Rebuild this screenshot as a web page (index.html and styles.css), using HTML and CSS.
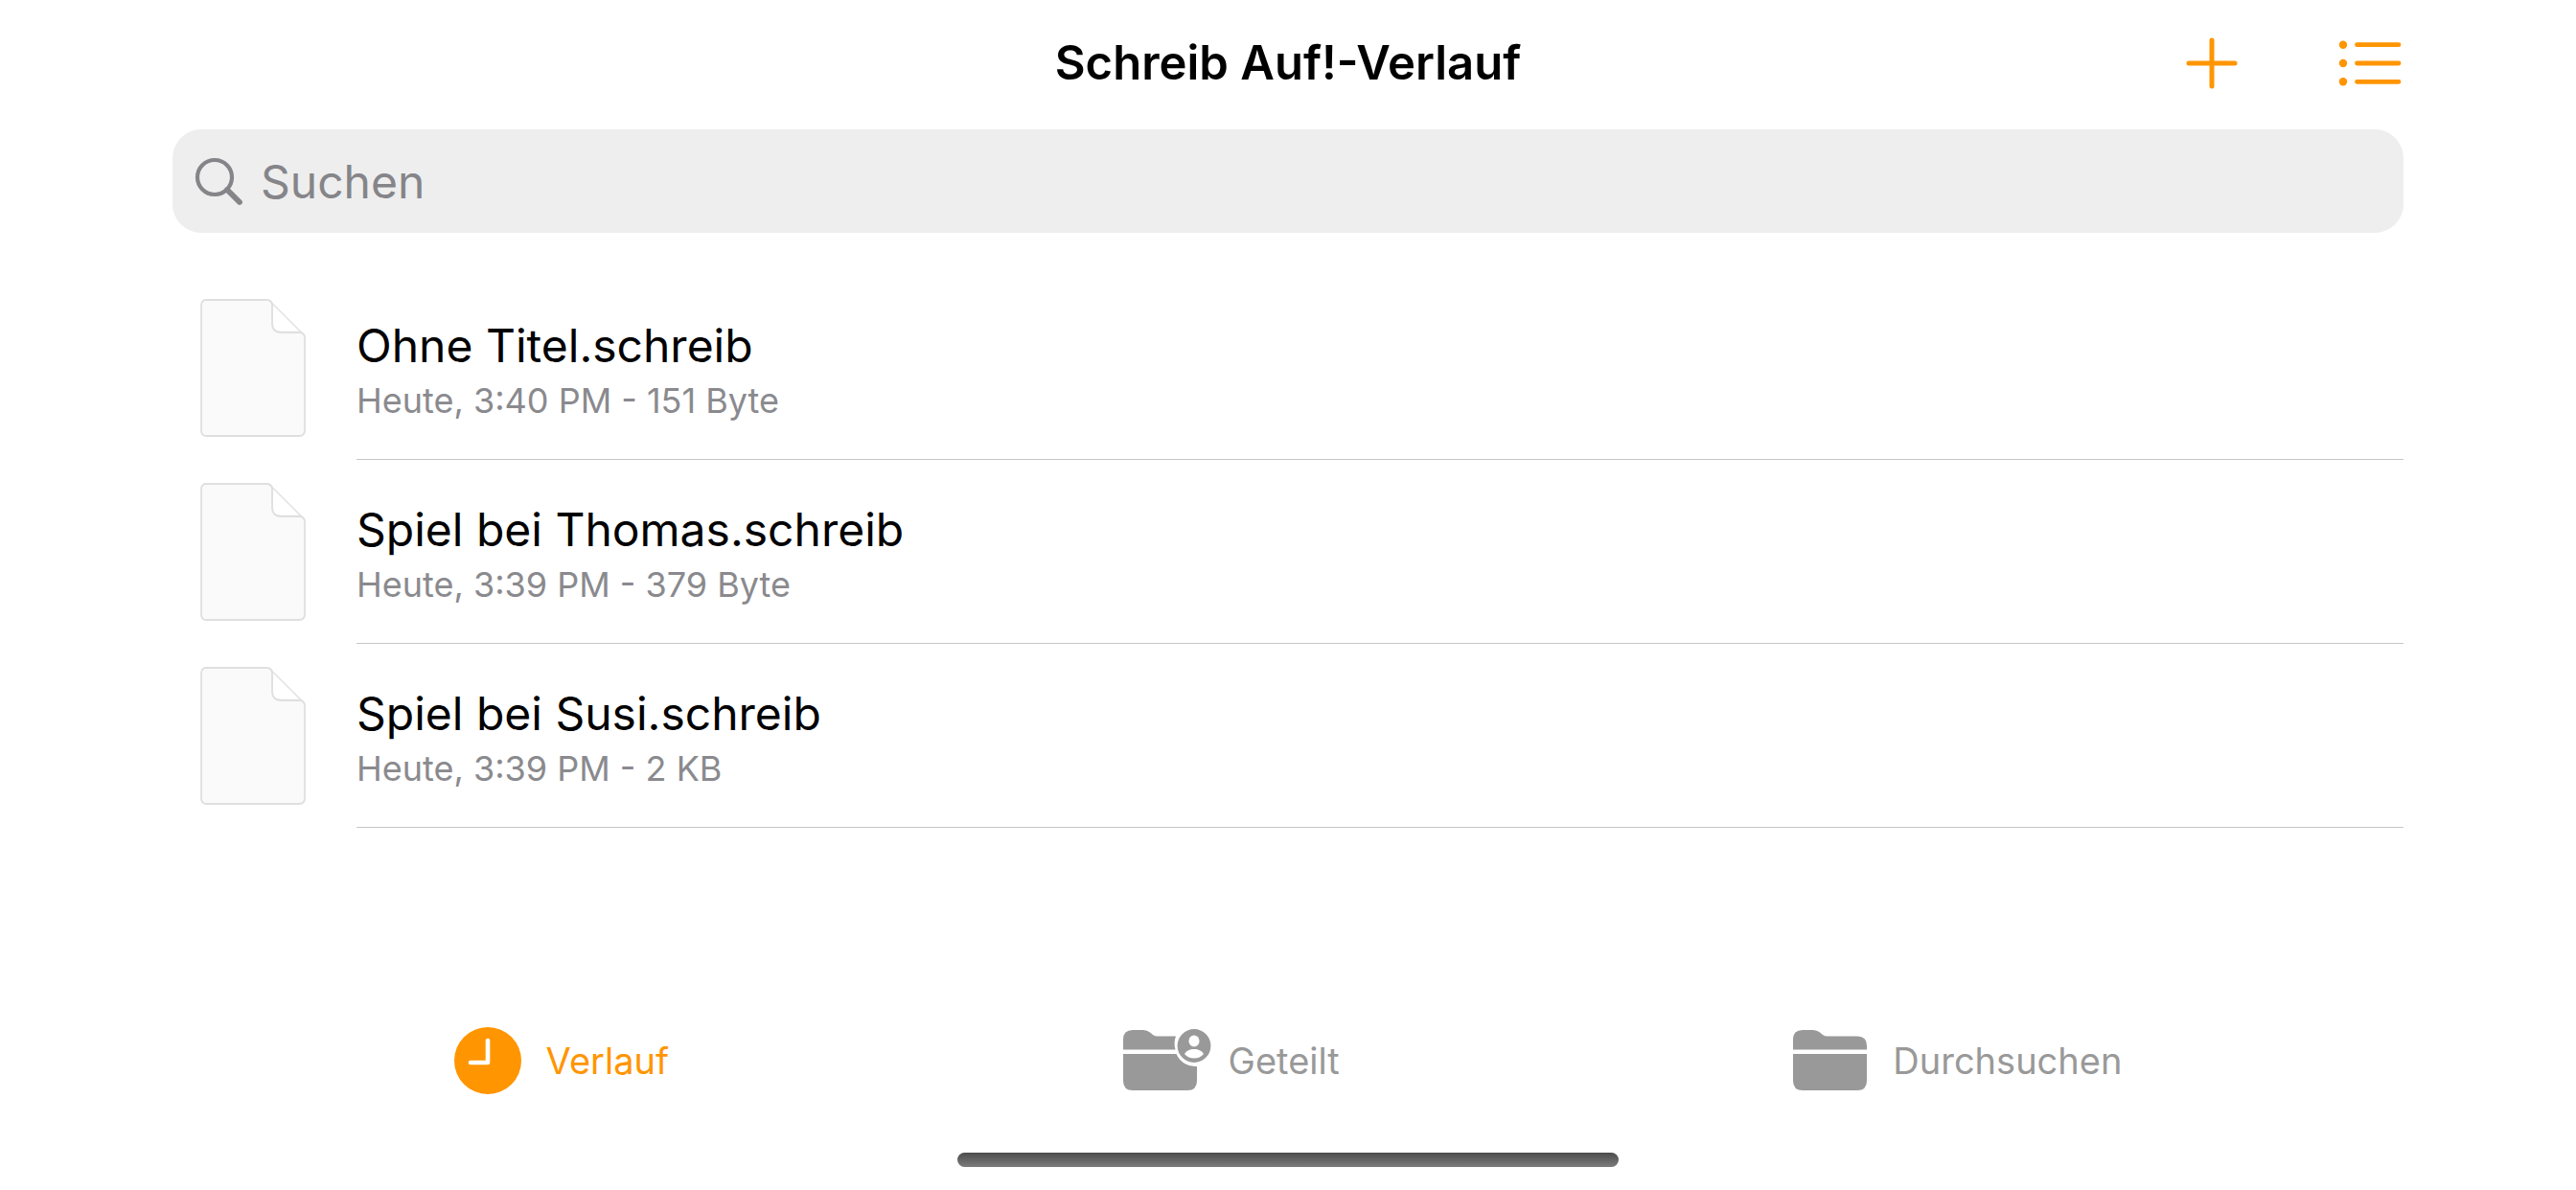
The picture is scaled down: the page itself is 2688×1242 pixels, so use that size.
FILE: index.html
```html
<!DOCTYPE html>
<html lang="de">
<head>
<meta charset="utf-8">
<meta name="viewport" content="width=device-width, initial-scale=1">
<title>Schreib Auf!-Verlauf</title>
<link rel="stylesheet" href="styles.css">
</head>
<body>
<div class="app">
  <header class="navbar">
    <h1 class="navbar-title">Schreib Auf!-Verlauf</h1>
    <div class="navbar-actions">
      <button class="icon-button" type="button" aria-label="Neu">
        <svg width="54" height="54" viewBox="0 0 54 54" fill="none" stroke="currentColor" stroke-width="5" stroke-linecap="round"><path d="M27 3v48M3 27h48"/></svg>
      </button>
      <button class="icon-button" type="button" aria-label="Listenansicht">
        <svg width="66" height="54" viewBox="0 0 66 54" fill="currentColor"><circle cx="5" cy="7.700" r="4.200"/><circle cx="5" cy="27" r="4.200"/><circle cx="5" cy="46.300" r="4.200"/><path d="M19.500 7.700h43.500M19.500 27h43.500M19.500 46.300h43.500" stroke="currentColor" stroke-width="4.800" stroke-linecap="round"/></svg>
      </button>
    </div>
  </header>

  <label class="search">
    <svg width="50" height="50" viewBox="0 0 50 50" fill="none" stroke="currentColor"><circle cx="20" cy="20" r="18" stroke-width="4.200"/><path d="M33 33l13 13" stroke-width="5.800" stroke-linecap="round"/></svg>
    <input class="search-input" type="text" placeholder="Suchen" aria-label="Suchen">
  </label>

  <main class="content">
    <ul class="files">
      <li><a class="file" href="#">
        <svg class="file-icon" width="110" height="144" viewBox="0 0 110 144"><use href="#document"/></svg>
        <span class="file-text"><span class="file-name">Ohne Titel.schreib</span><span class="file-meta">Heute, 3:40 PM - 151 Byte</span></span>
      </a></li>
      <li><a class="file" href="#">
        <svg class="file-icon" width="110" height="144" viewBox="0 0 110 144"><use href="#document"/></svg>
        <span class="file-text"><span class="file-name">Spiel bei Thomas.schreib</span><span class="file-meta">Heute, 3:39 PM - 379 Byte</span></span>
      </a></li>
      <li><a class="file" href="#">
        <svg class="file-icon" width="110" height="144" viewBox="0 0 110 144"><use href="#document"/></svg>
        <span class="file-text"><span class="file-name">Spiel bei Susi.schreib</span><span class="file-meta">Heute, 3:39 PM - 2 KB</span></span>
      </a></li>
    </ul>
  </main>

  <nav class="tabbar">
    <button class="tab tab-active" type="button">
      <svg width="72" height="72" viewBox="0 0 72 72"><circle cx="35" cy="36" r="35" fill="currentColor"/><path d="M35 15v23H17" fill="none" stroke="#fff" stroke-width="4.600" stroke-linecap="round" stroke-linejoin="round"/></svg>
      <span>Verlauf</span>
    </button>
    <button class="tab" type="button">
      <svg width="86" height="72" viewBox="0 0 86 72" fill="currentColor"><path d="M0 24.500V14Q0 4 10 4h11q4 0 7 2.500l3 2.500q2 1.500 5 1.500h19a21.500 21.500 0 0 0-.500 14ZM0 29h55.500a21.500 21.500 0 0 0 21.500 13v15q0 10-10 10H10Q0 67 0 57Z"/><circle cx="74" cy="20.500" r="17.400"/><ellipse cx="74" cy="15.500" rx="5.500" ry="6" fill="#fff"/><path d="M64 29c1.500-3 5.500-5 10-5s8.500 2 10 5c-2.500 3-6 4.500-10 4.500S66.500 32 64 29Z" fill="#fff"/></svg>
      <span>Geteilt</span>
    </button>
    <button class="tab" type="button">
      <svg width="80" height="72" viewBox="0 0 80 72" fill="currentColor"><path d="M0 24.500V14Q0 4 10 4h11q4 0 7 2.500l3 2.500q2 1.500 5 1.500h31q10 0 10 10v4ZM0 29h77v28q0 10-10 10H10Q0 67 0 57Z"/></svg>
      <span>Durchsuchen</span>
    </button>
  </nav>
  <div class="home-indicator"></div>
</div>

<svg width="0" height="0" class="symbols" aria-hidden="true">
  <symbol id="document" viewBox="0 0 110 144">
    <path d="M70 1.500q2 0 4 2l31 31H84q-9 0-9-9V7q0-4-5-5.500" fill="#fff" stroke="#e4e4e4" stroke-width="1.600"/>
    <path d="M6 1h63q6 0 6 6v19q0 9 9 9h19q6 0 6 6v96q0 6-6 6H6q-5 0-5-6V7q0-6 5-6Z" fill="#fafafa" stroke="#dfdfdf" stroke-width="1.800"/>
  </symbol>
</svg>
</body>
</html>
```
FILE: styles.css
```css
* { box-sizing: border-box; }

body {
  margin: 0;
  background: #fff;
  color: #000;
  font-family: Inter, "Liberation Sans", sans-serif;
}

button {
  padding: 0;
  border: 0;
  background: none;
  color: inherit;
  font: inherit;
}

svg {
  display: block;
  flex: none;
  overflow: visible;
}

.app {
  display: flex;
  flex-direction: column;
  min-height: 100vh;
  padding: 0 180px;
}

.navbar {
  display: grid;
  grid-template-columns: 1fr auto 1fr;
  align-items: center;
  height: 135px;
}

.navbar-title {
  grid-column: 2;
  margin: 0;
  font-size: 49px;
  font-weight: 600;
  line-height: 60px;
}

.navbar-actions {
  display: flex;
  justify-content: flex-end;
  gap: 105px;
  padding-right: 2px;
  color: #ff9500;
}

.navbar-title,
.navbar-actions {
  padding-bottom: 4px;
}

.search {
  display: flex;
  align-items: center;
  gap: 18px;
  height: 108px;
  padding: 2px 24px 0;
  border-radius: 30px;
  background: #eee;
  color: #858589;
}

.search-input {
  flex: 1;
  min-width: 0;
  padding: 0;
  border: 0;
  outline: 0;
  background: none;
  color: #000;
  font: inherit;
  font-size: 48px;
  line-height: 60px;
}

.search-input::placeholder {
  color: #858589;
  opacity: 1;
}

.content {
  flex: 1;
  padding-top: 45px;
}

.files {
  margin: 0;
  padding: 0;
  list-style: none;
}

.file {
  display: flex;
  height: 192px;
  padding-left: 29px;
  gap: 53px;
  color: inherit;
  text-decoration: none;
}

.file-icon {
  margin-top: 24px;
}

.file-text {
  display: flex;
  flex: 1;
  flex-direction: column;
  padding-top: 43px;
  border-bottom: 1px solid #c6c6c8;
}

.file-name {
  font-size: 48px;
  line-height: 60px;
}

.file-meta {
  color: #8a8a8e;
  font-size: 36px;
  line-height: 54px;
}

.tabbar {
  display: flex;
  justify-content: space-evenly;
  margin: 0 -180px;
  padding-bottom: 60px;
}

.tab {
  display: flex;
  align-items: center;
  gap: 24px;
  color: #999;
  font-size: 38px;
  line-height: 48px;
}

.tab-active {
  color: #ff9500;
}

.home-indicator {
  align-self: center;
  width: 690px;
  max-width: 50%;
  height: 15px;
  margin-bottom: 24px;
  border-radius: 8px;
  background: linear-gradient(#4c4c4c, #7c7c7c);
}

.symbols {
  position: absolute;
}
```
